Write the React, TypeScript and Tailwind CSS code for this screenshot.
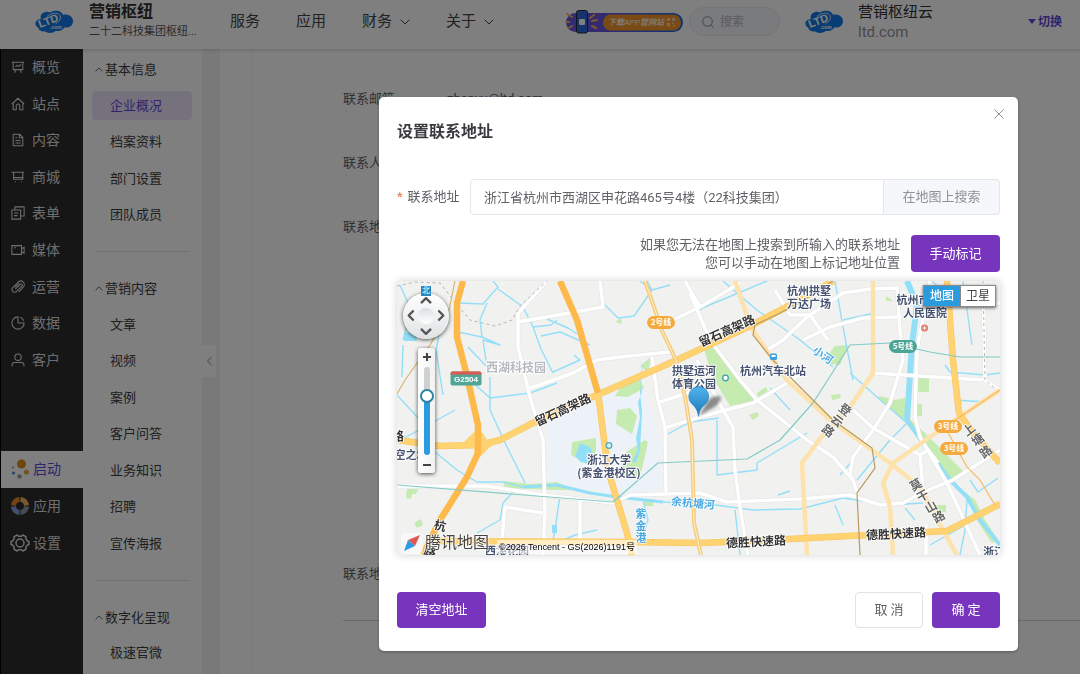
import type { ReactNode } from "react";

/*
 * Admin console page with the "set contact address" dialog open.
 * The map is an SVG whose coordinates start at 397,281.
 */

const railItems: { label: string; icon: ReactNode }[] = [
  { label: "概览", icon: <path d="M1 2.500h14M2.500 2.500v8.500h11v-8.500M5 8l2-2 2 1.500 2.500-2.500M5.500 11l-1.500 3.500M10.500 11l1.500 3.500" /> },
  { label: "站点", icon: <path d="M1 8 8 1.500 15 8M2.500 6.500v8h3.500V10a2 2 0 0 1 4 0v4.500h3.500v-8" /> },
  { label: "内容", icon: <path d="M2.500 1.500h7.500l3.500 3.500v9.500h-11zM9.500 1.500v4h4M5 5.500h2M5 8.500h6M5 11.500h6" /> },
  { label: "商城", icon: <path d="M.5 2.500h14.500M3 2.500v8h10.500v-8M3 8.500h10.500M4.500 13.500h1M11.500 13.500h1" /> },
  { label: "表单", icon: <path d="M1 4.500h10v10.500H1zM4.500 4V1h10.500v10.500h-3.500M3.500 8h5M3.500 11h4" /> },
  { label: "媒体", icon: <path d="M1 3h11v10H1zM12 6.500l3-1.500v6.500l-3-1.500M3.500 5.500h2" /> },
  { label: "运营", icon: <path d="M5 10.500l5.500-5.500a1.300 1.300 0 0 1 2 2L6.500 13A3 3 0 0 1 2 8.700L8.200 2.500a4 4 0 0 1 5.800 5.700L9 13.500M4.500 8.500l5-5" /> },
  { label: "数据", icon: <path d="M8 1a7 7 0 1 0 7 7H8zM10.500 1.500a7 7 0 0 1 4 4" /> },
  { label: "客户", icon: <path d="M8 1.200a3.700 3.700 0 1 1 0 7.400 3.700 3.700 0 0 1 0-7.400zM1.200 15.500v-2c0-1.800 1.300-2.700 3-2.700h7.600c1.700 0 3 .9 3 2.700v2" /> },
];

const menuGroups = [
  { title: "基本信息", items: ["企业概况", "档案资料", "部门设置", "团队成员"], height: "h-[146px]" },
  { title: "营销内容", items: ["文章", "视频", "案例", "客户问答", "业务知识", "招聘", "宣传海报"], height: "h-[256px]" },
  { title: "数字化呈现", items: ["极速官微", "官方商城"], height: "h-[72px]" },
];

const greens = [
  "703,345 715,343 757,400 730,406 712,376",
  "905,415 925,433 965,473 950,482 926,448 907,425",
  "895,400 905,398 909,425 878,398 880,396",
  "915,404 922,404 922,416 914,416",
  "918,374 929,374 929,392 916,392",
  "827,356 835,346 848,345 840,365 830,364",
  "615,396 621,386 640,379 644,388 628,397",
  "617,410 630,408 637,416 632,434 616,424",
  "572,442 596,438 596,450 590,466 580,460 571,455",
  "620,456 645,440 648,442 640,478 624,476",
  "503,481 530,484 557,482 575,490 555,490 505,488",
  "407,489 418,489 416,494 412,494 411,499 406,498",
  "414,523 421,519 423,525 417,528",
  "645,499 653,499 653,506 645,506",
  "749,415 757,412 759,416 753,420",
  "831,395 840,394 841,398 832,400",
  "757,393 766,387 768,391 758,397",
  "935,505 946,505 946,512 936,513",
  "965,492 975,500 985,520 998,540 992,543 978,522",
  "886,296 893,301 886,301",
  "615,322 621,318 622,324",
  "640,366 651,357 648,372",
];

const streams = [
  "458,303 483,304 498,287 493,281",
  "487,303 480,320 482,337 458,332",
  "482,337 500,345 483,340 487,367 468,347",
  "498,289 523,307 533,327 541,349 553,373",
  "523,307 547,281",
  "533,327 551,325 557,320",
  "547,319 568,328 577,334",
  "541,336 560,332 590,345",
  "553,372 580,360 574,355",
  "470,380 490,398 530,393 557,383",
  "490,377 490,410 507,447 525,483",
  "600,300 618,318 634,316 652,290 670,285",
  "640,281 652,290 647,281",
  "673,320 700,309 767,281",
  "723,281 757,310 800,340 833,367",
  "700,310 722,292 735,285",
  "850,373 877,397 907,423 890,440 857,480",
  "835,281 843,327 853,380",
  "843,320 870,314 873,312",
  "963,281 972,345",
  "932,281 950,298",
  "435,452 457,470 477,482 503,482 523,487 557,485 590,493 617,497 663,502 700,503 753,510 800,509 843,498 890,505 923,503",
  "515,490 503,503 500,520 477,533",
  "560,495 555,530 553,540",
  "400,285 411,310 403,340",
  "403,345 402,377",
  "397,395 420,420 435,428",
  "415,318 440,330 436,350 443,395",
  "400,440 423,428 455,410",
  "717,420 717,475 757,470 757,463 807,433",
  "690,422 719,418",
  "668,434 690,422",
  "853,460 840,475",
  "735,510 740,555",
  "778,495 790,491",
  "835,505 843,525",
  "905,508 915,520",
  "945,365 950,372 985,375 1000,373",
  "970,480 978,492 998,478",
  "930,545 965,525",
  "967,500 965,530 960,555",
  "552,545 575,535 597,530",
  "955,400 985,402",
  "770,388 790,410",
  "643,500 648,520 641,540",
];

const whiteRoads = [
  "547,281 518,313 518,347 523,368 530,397 543,440 545,513 543,555",
  "518,322 603,307 600,281",
  "528,389 573,373 597,360 620,357 670,352",
  "397,486 487,486 543,495 613,503 630,495 700,493 727,502 800,499 850,495 880,505 903,503 923,492 953,480 1000,450",
  "652,357 658,400 665,427 666,492",
  "665,428 700,417 753,403 787,383 800,374",
  "767,350 783,340 807,317 843,293 870,289 897,288 900,330 903,360 890,403 873,430 853,457 850,475",
  "790,315 810,315 828,340",
  "803,340 830,327 863,318 897,317",
  "690,293 710,340 740,380 757,400 807,440 833,457 853,480 858,495",
  "685,281 700,307",
  "673,320 700,307 740,283",
  "697,360 723,410 733,427 735,470 740,507 748,555",
  "853,410 873,428 920,455 923,490",
  "930,281 917,350 915,417 920,437 947,483 980,555",
  "873,373 983,380",
  "983,281 985,380 1000,390",
  "957,305 1000,303",
  "543,513 505,507 502,540",
  "580,500 580,540",
  "926,525 926,555",
  "660,402 690,392",
  "775,290 790,315",
  "920,455 928,450 938,463",
];

const paleRoads = [
  "735,281 745,310 750,326 773,360 787,380 830,420 890,463 920,487 940,525 957,555",
  "873,281 873,373 850,407 823,435 802,463 807,555",
  "1000,390 940,430 893,463 883,483 890,507 893,555",
];

const expressways = [
  "397,440 440,446 480,445 500,440 533,423 597,395 677,360 750,326 800,300 833,281",
  "598,393 608,470 617,500 627,533 632,555",
  "430,541 630,542 700,543 790,539 947,531 1000,504",
  "947,281 953,360 959,413 973,433 1000,463",
];

const highways = [
  "463,281 457,303 457,337 466,372 478,425 478,453 467,477 440,520 423,555",
  "560,281 577,320 589,362 598,393",
];

const metroTeal = ["397,485 613,502 658,463 747,459 780,440 813,403 850,345 890,343 930,352 960,357 1000,357"];

const placeLabels: [string, number, number][] = [
  ["杭州拱墅", 809, 295],
  ["万达广场", 809, 308],
  ["拱墅运河", 694, 375],
  ["体育公园", 694, 388],
  ["杭州汽车北站", 773, 375],
  ["浙江大学", 609, 464],
  ["(紫金港校区)", 609, 477],
  ["杭州市第一", 924, 304],
  ["人民医院", 925, 317],
  ["空之城", 411, 459],
  ["浙江", 994, 556],
  ["西溪花园", 507, 555],
];

// glyph, x, y, angle
const roadLabels: [string, number, number, number][] = [
  ["留石高架路", 727, 335, -24],
  ["留石高架路", 563, 414, -25],
  ["德胜快速路", 756, 546, -3],
  ["德胜快速路", 896, 538, -3],
  ["杭", 440, 530, 15],
  ["路", 430, 556, 20],
  ["路", 398, 441, 0],
];

const streetLabels: [string, number, number, number][] = [
  ["登", 845, 414, 38],
  ["云", 837, 425, 38],
  ["路", 828, 435, 38],
  ["莫", 916, 489, -30],
  ["干", 923, 500, -30],
  ["山", 931, 511, -30],
  ["路", 939, 521, -30],
  ["上", 969, 434, -38],
  ["塘", 978, 444, -38],
  ["路", 986, 456, -38],
];

const metroBadges: [string, number, number, string][] = [
  ["2号线", 661, 323, "#f5aa3f"],
  ["5号线", 903, 347, "#4ba494"],
  ["3号线", 948, 427, "#f5aa3f"],
  ["3号线", 954, 449, "#f5aa3f"],
];

function Lines({ list, color, width }: { list: string[]; color: string; width: number }) {
  return (
    <g fill="none" stroke={color} strokeWidth={width} strokeLinejoin="round">
      {list.map((points) => (
        <polyline key={points} points={points} />
      ))}
    </g>
  );
}

function CityMap() {
  return (
    <svg className="block h-full w-full" viewBox="397 281 603 274" preserveAspectRatio="xMidYMid slice" role="img" aria-label="地图">
      <defs>
        <linearGradient id="pin" x1="0" y1="0" x2="0" y2="1">
          <stop offset="0" stopColor="#4fb4ee" />
          <stop offset="1" stopColor="#1c76b8" />
        </linearGradient>
        <filter id="pinBlur" x="-.3" y="-.3" width="1.600" height="1.600">
          <feGaussianBlur stdDeviation="1.500" />
        </filter>
      </defs>
      <rect x="396" y="281" width="605" height="275" fill="#f1f1f0" />
      <polygon points="547,423 600,397 643,387 660,440 664,490 600,494 547,485" fill="#edf2f9" />
      {greens.map((points) => (
        <polygon key={points} points={points} fill="#c5ebb0" />
      ))}
      <Lines list={streams} color="#94dff8" width={1.400} />
      <polyline points="907,281 917,305 912,345 907,420" fill="none" stroke="#94dff8" strokeWidth="6" />
      <polyline points="907,420 928,450 950,480 967,497 980,520 1000,545" fill="none" stroke="#94dff8" strokeWidth="4" />
      <polyline points="523,487 557,485 590,493 617,497 663,502" fill="none" stroke="#94dff8" strokeWidth="3" />
      <path d="M643 362l-3 16 2 14-4 10 2 16-4 20 2 12-6 12h4l4-12 1-18 1-20-2-20zM580 443l10 4 5 10-4 7-10-2-6-6zM552 525l5 0 0 8-5 0zM404 332l12 1 1 8-13 0z" fill="#94dff8" />
      <Lines list={whiteRoads} color="#e2e2e2" width={4.500} />
      <Lines list={whiteRoads} color="#ffffff" width={3.500} />
      <g fill="none" strokeDasharray="3 3" stroke="#b5b5b5">
        <polyline points="397,286 415,282 440,283 458,306 470,320 495,326 512,320 520,306 547,281" />
        <polyline points="983,281 985,380 1000,392" />
      </g>
      <Lines list={paleRoads} color="#fde2ac" width={4.500} />
      <Lines list={expressways} color="#f9c45c" width={6.500} />
      <Lines list={expressways} color="#ffd272" width={5.500} />
      <path d="M463 443l11-11 8 0 6 9 16-2-14 8-14 14-2-13z" fill="#ffd272" />
      <Lines list={highways} color="#fdb94a" width={6.500} />
      <Lines list={metroTeal} color="#84cbc5" width={1.200} />
      <polyline points="645,281 663,333 676,360 685,397 692,440 694,523 701,555" fill="none" stroke="#f7cd7c" strokeWidth="4" />
      <polyline points="645,281 663,333 676,360 685,397 692,440 694,523 701,555" fill="none" stroke="#fdf0d5" strokeWidth="1" />
      <polyline points="833,281 800,302 780,313 755,325 753,335 773,360 833,420 872,448 875,468 857,493 860,555" fill="none" stroke="#b79a63" strokeWidth="1.200" />
      <polyline points="1000,390 945,427 967,467 980,480 995,505" fill="none" stroke="#f6b95c" strokeWidth="1.200" />
      <polyline points="455,281 448,315 430,345 405,380 397,394" fill="none" stroke="#d8b67a" strokeWidth="1.200" />

      <g fontFamily="'Noto Sans CJK SC', sans-serif" textAnchor="middle" paintOrder="stroke" strokeLinejoin="round">
        <text x="516" y="372" fontSize="12" fontWeight="700" fill="#b6babf" stroke="#fff" strokeWidth="2">西湖科技园</text>
        <g fontSize="11" fontWeight="700" fill="#465270" stroke="#fff" strokeWidth="2">
          {placeLabels.map(([name, x, y]) => (
            <text key={name} x={x} y={y}>{name}</text>
          ))}
        </g>
        <g fontSize="12" fontWeight="700" fill="#333" stroke="#fff" strokeWidth="1.500">
          {roadLabels.map(([name, x, y, angle]) => (
            <text key={`${name}${x}`} x={x} y={y} transform={`rotate(${angle} ${x} ${y - 4})`}>{name}</text>
          ))}
        </g>
        <g fontSize="12" fontWeight="700" fill="#666" stroke="#fff" strokeWidth="1.500">
          {streetLabels.map(([name, x, y, angle]) => (
            <text key={`${name}${x}`} x={x} y={y} transform={`rotate(${angle} ${x} ${y - 4})`}>{name}</text>
          ))}
        </g>
        <g fontSize="11" fontWeight="700" fill="#4aaae2" stroke="#fff" strokeWidth="1.500">
          <text x="823" y="359" transform="rotate(35 823 355)">小河</text>
          <text x="693" y="507" transform="rotate(5 693 503)">余杭塘河</text>
          <text x="641" y="518">紫</text>
          <text x="641" y="530">金</text>
          <text x="641" y="542">港</text>
        </g>
        {metroBadges.map(([name, x, y, color]) => (
          <g key={`${name}${x}`}>
            <rect x={x - 14} y={y - 7} width="28" height="13" rx="6.500" fill={color} />
            <text x={x} y={y + 2} fontSize="8" fontWeight="700" fill="#fff">{name}</text>
          </g>
        ))}
      </g>

      <rect x="450.500" y="371.500" width="31" height="14" rx="2" fill="#4fa696" />
      <path d="M450.500 374.500v-1a2 2 0 0 1 2-2h27a2 2 0 0 1 2 2v1z" fill="#e0584f" />
      <text x="466" y="382" fontSize="8" fontWeight="700" fill="#fff" textAnchor="middle" fontFamily="Liberation Sans, sans-serif">G2504</text>

      <circle cx="924.500" cy="328" r="3.500" fill="#e4776a" />
      <path d="M922.500 328h4M924.500 326v4" stroke="#fff" />
      <rect x="770" y="353.500" width="7" height="6.500" rx="1.500" fill="#3f9fe0" />
      <path d="M771.500 356h4" stroke="#fff" strokeWidth="2" />
      <circle cx="725.500" cy="378" r="2.800" fill="#fff" stroke="#3f9fa8" strokeWidth="1.300" />
      <circle cx="609" cy="445.500" r="2.800" fill="#d6f0f5" stroke="#52a9bd" strokeWidth="1.300" />

      <path d="M699 416l7-12c5-8 11-9 15-7 0 5-5 10-12 13z" fill="#444" opacity=".6" filter="url(#pinBlur)" />
      <path d="M698.500 416.500c-1-7-3-9-6.500-12.500a10 10 0 1 1 13.500 0c-4 3.500-6 5.500-7 12.500z" fill="url(#pin)" stroke="#1f78b6" strokeWidth=".6" />
    </svg>
  );
}

function Chevron({ className }: { className: string }) {
  return (
    <svg className={className} viewBox="0 0 10 6" fill="none" stroke="currentColor">
      <path d="M.7.700 5 5 9.300.7" />
    </svg>
  );
}

function CloudLogo() {
  return (
    <svg className="h-6 w-10 shrink-0" viewBox="0 0 40 24">
      <path d="M7 9C5 4 11 0 16 2.500 20-.500 28 .500 29 5c4-1.500 10 1 10 6s-4 7-9 6.500c-1 3-6 4-8.500 3.500-3 3-9 2-10 .5-4 .5-7-1-7-3.500C0 16 0 9.500 7 9z" fill="#1378e4" />
      <g fill="#fff" fontFamily="Liberation Sans, sans-serif" fontWeight="700">
        <text x="6" y="18" fontSize="11" transform="rotate(-21 6 18)">LTD</text>
        <text x="16" y="19" fontSize="5">.com</text>
      </g>
      <path d="M13 6.500c5-4.500 13-4.500 13.500.500 0 3-2 5-5 7" fill="none" stroke="#fff" strokeWidth=".8" />
    </svg>
  );
}

function PromoBadge() {
  return (
    <svg className="h-[26px] w-[120px]" viewBox="0 0 120 26">
      <defs>
        <linearGradient id="promo">
          <stop offset=".3" stopColor="#6a55dd" />
          <stop offset="1" stopColor="#1469e0" />
        </linearGradient>
      </defs>
      <rect x="1" y="4" width="117" height="19" rx="9.500" fill="url(#promo)" />
      <rect x="38" y="5.500" width="78" height="16" rx="8" fill="#f2952c" />
      <g stroke="#f0b45c" strokeWidth="2" strokeLinecap="round">
        <path d="M2 5l5 3M1 13h3M4 19l3-2M29 6l-4 3M27 12l5-1M27 17l4 2" />
      </g>
      <rect x="11.500" y="1.500" width="11" height="22.500" rx="2" fill="#2a67d8" stroke="#20283c" />
      <rect x="14" y="10" width="6" height="6" rx="1" fill="#fff" />
      <text x="43" y="16" fontSize="8" fontWeight="500" fontStyle="italic" fill="#fff" fontFamily="Liberation Sans, 'Noto Sans CJK SC', sans-serif">下载APP管网站</text>
      <g fill="none" stroke="#fbe6cc">
        <path d="M102.500 9.500h2v2h-2zM107.500 9.500h2v2h-2zM102.500 14.500h2v2h-2zM107 14.500h1.500M108 17h2" />
      </g>
    </svg>
  );
}

function Header() {
  return (
    <header className="relative z-10 flex h-[49px] shrink-0 items-center bg-white pb-[6px] pl-[34px] pr-[18px] shadow-[0_1px_4px_rgba(0,0,0,0.18)]">
      <CloudLogo />
      <div className="ml-[15px] w-[116px] whitespace-nowrap">
        <div className="text-base font-bold leading-5 text-[#303133]">营销枢纽</div>
        <div className="text-[11px] leading-5 text-[#555]">二十二科技集团枢纽...</div>
      </div>
      <nav className="ml-[25px] flex items-center gap-9 text-[15px] text-[#444]">
        <a href="#service">服务</a>
        <a href="#apps">应用</a>
        <a href="#finance" className="flex items-center gap-2">财务<Chevron className="h-[6px] w-[10px]" /></a>
        <a href="#about" className="flex items-center gap-2">关于<Chevron className="h-[6px] w-[10px]" /></a>
      </nav>
      <div className="ml-auto flex items-center">
        <PromoBadge />
        <label className="ml-1 flex h-[29px] w-[91px] items-center gap-[6px] rounded-full border border-[#e9ebee] bg-[#f5f6f8] pl-3 text-[#8a8d93]">
          <svg className="h-3 w-3 shrink-0" viewBox="0 0 12 12" fill="none" stroke="currentColor">
            <circle cx="5.500" cy="5.500" r="4.800" />
            <path d="M9 9l2.500 2.500" />
          </svg>
          <input className="w-12 bg-transparent text-xs outline-none placeholder:text-[#b4b7bd]" placeholder="搜索" aria-label="搜索" />
        </label>
        <div className="ml-6"><CloudLogo /></div>
        <div className="ml-[14px] w-[170px]">
          <div className="text-[15px] leading-5 text-[#303133]">营销枢纽云</div>
          <div className="text-[15px] leading-5 text-[#909399]">ltd.com</div>
        </div>
        <button className="flex items-center gap-[2px] text-xs font-bold text-[#5b49d6]">
          <svg className="h-[5px] w-2" viewBox="0 0 8 5" fill="currentColor"><path d="M0 0h8L4 5z" /></svg>
          切换
        </button>
      </div>
    </header>
  );
}

function Rail() {
  return (
    <aside className="w-[83px] shrink-0 border-l border-black bg-[#2d2d2d] text-sm text-[#dcdcdc]">
      <nav className="grid h-[329px] auto-rows-fr">
        {railItems.map((item) => (
          <a key={item.label} href={`#${item.label}`} className="flex items-center gap-[7px] pl-[10px]">
            <svg className="h-[14px] w-[14px]" viewBox="0 0 16 16" fill="none" stroke="currentColor" strokeWidth="1.200">{item.icon}</svg>
            {item.label}
          </a>
        ))}
      </nav>
      <nav className="mt-[73px] grid h-[110px] auto-rows-fr">
        <a href="#start" className="flex items-center gap-[3px] bg-white pl-[9px] text-[#5b49d6]">
          <svg className="h-5 w-5" viewBox="0 0 20 20">
            <circle cx="11.500" cy="5" r="4.500" fill="#e38b1e" />
            <circle cx="16.500" cy="13" r="2.600" fill="#e9a94f" />
            <circle cx="9.500" cy="17.500" r="2.200" fill="#9a9a9a" />
            <circle cx="3.500" cy="14" r="1.600" fill="#5b86c9" />
            <circle cx="3" cy="8.500" r="1.100" fill="#86a7d8" />
          </svg>
          启动
        </a>
        <a href="#app" className="flex items-center gap-[3px] pl-[9px]">
          <svg className="h-5 w-5" viewBox="0 0 20 20" fill="none" strokeWidth="5">
            <path d="M3.500 9.500a6.500 6.500 0 0 1 6-6" stroke="#e38b1e" />
            <path d="M10.500 3.500a6.500 6.500 0 0 1 6 6" stroke="#eeb45f" />
            <path d="M16.500 10.500a6.500 6.500 0 0 1-6 6" stroke="#8d97a6" />
            <path d="M9.500 16.500a6.500 6.500 0 0 1-6-6" stroke="#7f9fdd" />
          </svg>
          应用
        </a>
        <a href="#settings" className="flex items-center gap-[3px] pl-[9px]">
          <svg className="h-5 w-5" viewBox="0 0 20 20" fill="none" stroke="currentColor" strokeWidth="1.500">
            <path d="M7 2l1.500 1.200h3L13 2l3 1.800-.2 2L17.500 8l1.500.7v2.600l-1.500.7-1.700 2.200.2 2L13 18l-1.500-1.200h-3L7 18l-3-1.800.2-2L2.500 12 1 11.300V8.700L2.500 8l1.700-2.200-.2-2z" strokeLinejoin="round" />
            <circle cx="10" cy="10" r="4" />
          </svg>
          设置
        </a>
      </nav>
    </aside>
  );
}

function Menu() {
  return (
    <aside className="w-[119px] shrink-0 overflow-hidden bg-white text-[13px] text-[#3c3d40]">
      {menuGroups.map((group, index) => (
        <section key={group.title} className={index > 0 ? "mx-[9px] pt-[18px]" : "mx-[9px] pt-[3px]"}>
          {index > 0 && <hr className="mx-1 mb-[19px] border-[#e2e2e4]" />}
          <h3 className="flex h-[35px] items-center gap-[2px] pl-[3px]">
            <Chevron className="h-[5px] w-2 rotate-180" />
            {group.title}
          </h3>
          <ul className={`grid auto-rows-fr ${group.height}`}>
            {group.items.map((item) => (
              <li key={item} className="flex items-center">
                <a
                  href={`#${item}`}
                  className={
                    item === "企业概况"
                      ? "flex h-[29px] w-[100px] items-center rounded-sm bg-[#ebe4fb] pl-[18px] text-[#5b49d6]"
                      : "flex h-[29px] w-[100px] items-center pl-[18px]"
                  }
                >
                  {item}
                </a>
              </li>
            ))}
          </ul>
        </section>
      ))}
    </aside>
  );
}

function MapControls() {
  const pan = "flex items-center justify-center text-[#555]";
  return (
    <>
      <div className="absolute left-[6px] top-3 grid h-[46px] w-[46px] grid-cols-3 grid-rows-3 rounded-full bg-linear-to-b from-white to-[#dfe2e4] shadow-[0_1px_4px_rgba(0,0,0,0.7)]">
        <button aria-label="向上" className={`${pan} col-start-2`}><Chevron className="h-[7px] w-3 rotate-180 stroke-2" /></button>
        <button aria-label="向左" className={`${pan} col-start-1 row-start-2`}><Chevron className="h-[7px] w-3 shrink-0 rotate-90 stroke-2" /></button>
        <span className="col-start-2 row-start-2 rounded-full bg-linear-to-b from-[#dcdfe1] to-white" />
        <button aria-label="向右" className={`${pan} col-start-3 row-start-2`}><Chevron className="h-[7px] w-3 shrink-0 -rotate-90 stroke-2" /></button>
        <button aria-label="向下" className={`${pan} col-start-2 row-start-3`}><Chevron className="h-[7px] w-3 stroke-2" /></button>
      </div>
      <span className="absolute left-6 top-[5px] flex h-[10px] w-[10px] items-center justify-center bg-[#2a86bb] text-[8px] leading-none text-white">北</span>
      <div className="absolute left-[21px] top-[67px] flex h-[125px] w-[17px] flex-col items-center justify-between rounded-[3px] bg-linear-to-r from-white to-[#f1f1f1] shadow-[0_1px_4px_rgba(0,0,0,0.7)]">
        <button aria-label="放大" className="flex h-[17px] w-full items-center justify-center">
          <svg className="h-2 w-2" viewBox="0 0 8 8" stroke="#444" strokeWidth="2"><path d="M0 4h8M4 0v8" /></svg>
        </button>
        <input
          type="range"
          min={0}
          max={100}
          defaultValue={69}
          aria-label="缩放级别"
          className="h-[88px] w-[6px] appearance-none rounded-full bg-[linear-gradient(to_bottom,#cdd1d3_34%,#2b9be0_34%)] [direction:rtl] [writing-mode:vertical-lr] [&::-webkit-slider-thumb]:h-[14px] [&::-webkit-slider-thumb]:w-[14px] [&::-webkit-slider-thumb]:appearance-none [&::-webkit-slider-thumb]:rounded-full [&::-webkit-slider-thumb]:border-2 [&::-webkit-slider-thumb]:border-[#2b82a5] [&::-webkit-slider-thumb]:bg-white"
        />
        <button aria-label="缩小" className="flex h-[17px] w-full items-center justify-center">
          <svg className="h-2 w-2" viewBox="0 0 8 8" stroke="#444" strokeWidth="2"><path d="M0 4h8" /></svg>
        </button>
      </div>
      <div className="absolute right-1 top-1 flex h-[22px] border border-[#8a8a8a] bg-white text-xs leading-none shadow-[0_1px_3px_rgba(0,0,0,0.6)]">
        <button className="w-9 bg-[#2b9be0] font-medium text-white">地图</button>
        <button className="w-[35px] border-l border-[#8a8a8a] text-[#444]">卫星</button>
      </div>
      <div className="absolute bottom-0 left-0 flex items-center">
        <svg className="h-6 w-7" viewBox="0 0 28 24">
          <rect x="4" y="2" width="22" height="21" rx="4" fill="#fff" opacity=".5" />
          <path d="M23 4 18 15l-7-6z" fill="#e0584f" />
          <path d="M7 20 18 15l-7-6z" fill="#2f9be6" />
        </svg>
        <span className="text-base leading-6 text-[#444] [text-shadow:0_0_2px_#fff,0_0_2px_#fff,0_0_2px_#fff]">腾讯地图</span>
        <span className="ml-2 mt-2 bg-white/60 px-[2px] font-['Liberation_Sans','Noto_Sans_CJK_SC',sans-serif] text-[9px] leading-[14px] text-black">©2026 Tencent - GS(2026)1191号</span>
      </div>
    </>
  );
}

function AddressDialog() {
  return (
    <div className="fixed inset-0 z-20 flex items-start justify-center bg-black/50 pl-[317px] pt-[97px] text-[13px] text-[#606266]">
      <div role="dialog" aria-modal="true" aria-labelledby="dialog-title" className="relative w-full max-w-[639px] rounded-[5px] bg-white px-[18px] pb-[23px] pt-[23px] shadow-[0_1px_3px_rgba(0,0,0,0.3)]">
        <button aria-label="关闭" className="absolute right-[14px] top-3 text-[#909399]">
          <svg className="h-[10px] w-[10px]" viewBox="0 0 10 10" stroke="currentColor"><path d="M.5.500l9 9M9.500.500l-9 9" /></svg>
        </button>
        <h2 id="dialog-title" className="text-base font-bold leading-6 text-[#3a3b3e]">设置联系地址</h2>

        <div className="mt-[35px] flex h-9 items-center">
          <label htmlFor="address" className="w-[73px] shrink-0">
            <span className="mr-[5px] text-[#e8743b]">*</span>
            联系地址
          </label>
          <input
            id="address"
            className="h-full min-w-0 flex-1 rounded-l border border-[#e4e7ea] px-[13px] pb-[2px] outline-none"
            defaultValue="浙江省杭州市西湖区申花路465号4楼（22科技集团）"
          />
          <button className="h-full w-[116px] rounded-r border border-l-0 border-[#e4e7ea] bg-[#f5f7fa] text-[#909399]">在地图上搜索</button>
        </div>

        <div className="mt-5 flex h-[37px] items-center justify-end gap-[11px]">
          <p className="text-right leading-[18px]">
            如果您无法在地图上搜索到所输入的联系地址
            <br />
            您可以手动在地图上标记地址位置
          </p>
          <button className="h-full w-[89px] rounded bg-[#7735bd] text-white">手动标记</button>
        </div>

        <div className="relative mt-[9px] h-[274px] overflow-hidden shadow-[0_0_8px_rgba(0,0,0,0.18)]">
          <CityMap />
          <MapControls />
        </div>

        <div className="mt-[37px] flex h-9 gap-[9px]">
          <button className="mr-auto w-[89px] rounded bg-[#7735bd] text-white">清空地址</button>
          <button className="w-[68px] rounded border border-[#e0e2e6]">取 消</button>
          <button className="w-[68px] rounded bg-[#7735bd] text-white">确 定</button>
        </div>
      </div>
    </div>
  );
}

export default function App() {
  return (
    <div className="flex h-screen flex-col overflow-hidden bg-white font-[Roboto,'Noto_Sans_CJK_SC',sans-serif]">
      <Header />
      <div className="flex min-h-0 flex-1">
        <Rail />
        <Menu />
        <div className="w-[18px] shrink-0 bg-[#f3f3f3] pt-[296px]">
          <button aria-label="收起菜单" className="flex h-8 w-[14px] items-center justify-center rounded-r-sm bg-white text-[#888]">
            <Chevron className="h-[6px] w-[11px] shrink-0 rotate-90" />
          </button>
        </div>
        <main className="ml-8 flex-1 border-l border-[#f2f2f2] pl-[90px] text-[13px] text-[#606266]">
          <dl className="border-b border-[#d4d4d4] pt-[34px]">
            <div className="flex h-16 pt-[6px]"><dt className="w-[104px]">联系邮箱</dt><dd>zhenyu@ltd.com</dd></div>
            <div className="h-16 pt-[6px]"><dt>联系人</dt></div>
            <div className="h-[347px] pt-[6px]"><dt>联系地址</dt></div>
            <div className="h-[62px] pt-[6px]"><dt>联系地图</dt></div>
          </dl>
        </main>
      </div>
      <AddressDialog />
    </div>
  );
}
